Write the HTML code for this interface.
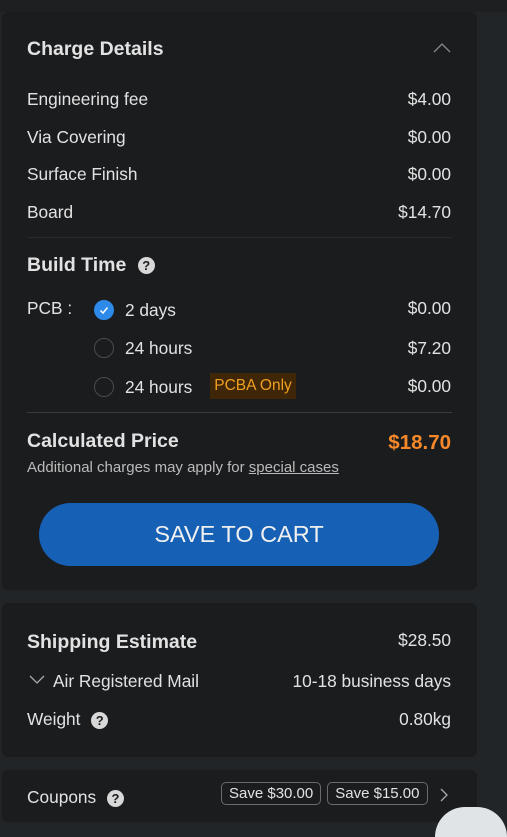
<!DOCTYPE html>
<html><head><style>
html,body{margin:0;width:507px;height:837px;overflow:hidden}
body{background:#222527;font-family:"Liberation Sans",Arial,sans-serif;color:#e2e2e2;position:relative;font-size:17.3px}
.top{position:absolute;left:0;top:0;width:507px;height:12px;background:#1d1f21}
.card{position:absolute;left:2px;width:475px;background:#1b1c1e;border-radius:6px}
.t{position:absolute;white-space:nowrap}
.r{position:absolute;right:26px;white-space:nowrap}
.b{font-weight:bold;font-size:19.5px}
.q{display:inline-block;width:17px;height:17px;border-radius:50%;background:#d8d8d8;color:#1b1c1e;font-size:13px;font-weight:bold;text-align:center;line-height:17px;vertical-align:middle}
.rad{position:absolute;left:92px;width:18px;height:18px;border:1px solid #4a4b4d;border-radius:50%}
.cp{display:inline-block;border:1px solid #6a6a6a;border-radius:5px;padding:2px 7px;font-size:15px;margin-left:6px}
</style></head><body>
<div class="top"></div>
<div class="card" style="top:12px;height:578px">
<div class="t b" style="left:25px;top:26px">Charge Details</div>
<svg style="position:absolute;left:430px;top:30px" width="20" height="12"><path d="M2 10L10 2L18 10" stroke="#888" fill="none" stroke-width="1.3"/></svg>
<div class="t" style="left:25px;top:77px">Engineering fee</div><div class="r" style="top:77px">$4.00</div>
<div class="t" style="left:25px;top:115px">Via Covering</div><div class="r" style="top:115px">$0.00</div>
<div class="t" style="left:25px;top:152px">Surface Finish</div><div class="r" style="top:152px">$0.00</div>
<div class="t" style="left:25px;top:190px">Board</div><div class="r" style="top:190px">$14.70</div>
<div style="position:absolute;left:25px;width:425px;top:225px;height:1px;background:#28292b"></div>
<div class="t b" style="left:25px;top:242px">Build Time <span class="q" style="margin-left:6px">?</span></div>
<div class="t" style="left:25px;top:286px">PCB :</div>
<div class="rad" style="top:288px;background:#2d8ae8;border-color:#2d8ae8"><svg width="18" height="18"><path d="M5.5 9.5L8 12L12.5 6.5" stroke="#fff" fill="none" stroke-width="1.5"/></svg></div>
<div class="t" style="left:123px;top:288px">2 days</div><div class="r" style="top:286px">$0.00</div>
<div class="rad" style="top:326px"></div>
<div class="t" style="left:123px;top:326px">24 hours</div><div class="r" style="top:326px">$7.20</div>
<div class="rad" style="top:365px"></div>
<div class="t" style="left:123px;top:365px">24 hours</div>
<div class="t" style="left:208px;top:361px;width:86px;height:26px;background:#3e2606;color:#f0a020;font-size:15.5px;line-height:26px;text-align:center">PCBA Only</div>
<div class="r" style="top:364px">$0.00</div>
<div style="position:absolute;left:25px;width:425px;top:400px;height:1px;background:#3a3b3d"></div>
<div class="t b" style="left:25px;top:418px">Calculated Price</div>
<div class="r b" style="top:419px;color:#f7892b;font-size:20.5px">$18.70</div>
<div class="t" style="left:25px;top:447px;font-size:15px;color:#bbb">Additional charges may apply for <u>special cases</u></div>
<div style="position:absolute;left:37px;top:491px;width:400px;height:63px;border-radius:32px;background:#1660b5;color:#f0f0f0;font-size:23.5px;text-align:center;line-height:63px">SAVE TO CART</div>
</div>
<div class="card" style="top:603px;height:154px">
<div class="t b" style="left:25px;top:28px">Shipping Estimate</div><div class="r" style="top:27px">$28.50</div>
<svg style="position:absolute;left:27px;top:72px" width="16" height="10"><path d="M1 1L8 8L15 1" stroke="#aaa" fill="none" stroke-width="1.3"/></svg>
<div class="t" style="left:51px;top:68px">Air Registered Mail</div><div class="r" style="top:68px">10-18 business days</div>
<div class="t" style="left:25px;top:106px">Weight <span class="q" style="margin-left:6px">?</span></div><div class="r" style="top:106px">0.80kg</div>
</div>
<div class="card" style="top:770px;height:52px">
<div class="t" style="left:25px;top:17px">Coupons <span class="q" style="margin-left:6px">?</span></div>
<div class="t" style="left:213px;top:12px"><span class="cp">Save $30.00</span><span class="cp">Save $15.00</span></div>
<svg style="position:absolute;left:438px;top:18px" width="8" height="14"><path d="M1 1L7 7L1 13" stroke="#aaa" fill="none" stroke-width="1.3"/></svg>
</div>
<div style="position:absolute;left:435px;top:807px;width:72px;height:30px;border-radius:40px 40px 0 0;background:#e1e4e6"></div>
</body></html>
